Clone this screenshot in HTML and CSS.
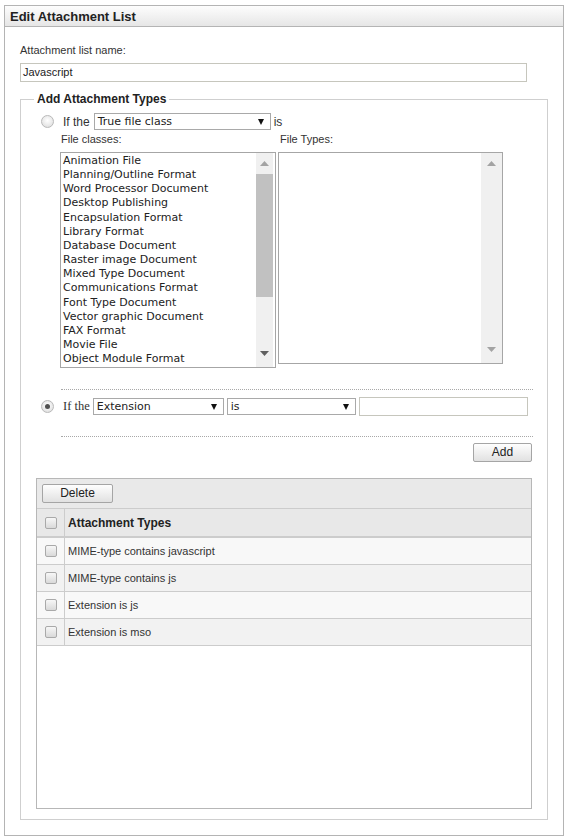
FILE: index.html
```html
<!DOCTYPE html>
<html>
<head>
<meta charset="utf-8">
<title>Edit Attachment List</title>
<link rel="stylesheet" href="styles.css">
</head>
<body>
<div class="panel">
  <div class="panel-head">Edit Attachment List</div>
  <div class="panel-body">
    <div class="field-label">Attachment list name:</div>
    <div class="text-box name-box">Javascript</div>
    <fieldset class="types">
      <legend>Add Attachment Types</legend>
      <div class="cond-row row-class">
        <span class="radio"></span>
        <span class="if-label">If the</span>
        <span class="select sel-class"><span class="val">True file class</span><svg class="caret" viewBox="0 0 6 6"><path d="M0 0H6L3 6Z" fill="#111"/></svg></span>
        <span class="is-label">is</span>
      </div>
      <div class="lists">
        <div class="list-col col-classes">
          <div class="list-label">File classes:</div>
          <div class="listbox lb-classes">
            <ul class="options">
              <li>Animation File</li>
              <li>Planning/Outline Format</li>
              <li>Word Processor Document</li>
              <li>Desktop Publishing</li>
              <li>Encapsulation Format</li>
              <li>Library Format</li>
              <li>Database Document</li>
              <li>Raster image Document</li>
              <li>Mixed Type Document</li>
              <li>Communications Format</li>
              <li>Font Type Document</li>
              <li>Vector graphic Document</li>
              <li>FAX Format</li>
              <li>Movie File</li>
              <li>Object Module Format</li>
            </ul>
            <div class="scroll">
              <span class="sb-btn"><svg width="9" height="5" viewBox="0 0 9 5"><path d="M0 5L4.5 0L9 5Z" fill="#a3a3a3"/></svg></span>
              <span class="thumb"></span>
              <span class="sb-fill"></span>
              <span class="sb-btn sb-down"><svg width="9" height="5" viewBox="0 0 9 5"><path d="M0 0L4.5 5L9 0Z" fill="#606060"/></svg></span>
            </div>
          </div>
        </div>
        <div class="list-col col-types">
          <div class="list-label">File Types:</div>
          <div class="listbox lb-types">
            <ul class="options"></ul>
            <div class="scroll">
              <span class="sb-btn"><svg width="9" height="5" viewBox="0 0 9 5"><path d="M0 5L4.5 0L9 5Z" fill="#a3a3a3"/></svg></span>
              <span class="sb-fill"></span>
              <span class="sb-btn sb-down"><svg width="9" height="5" viewBox="0 0 9 5"><path d="M0 0L4.5 5L9 0Z" fill="#a3a3a3"/></svg></span>
            </div>
          </div>
        </div>
      </div>
      <div class="dots dots-first"></div>
      <div class="cond-row row-ext">
        <span class="radio checked"></span>
        <span class="if-label if-serif">If the</span>
        <span class="select sel-ext"><span class="val">Extension</span><svg class="caret" viewBox="0 0 6 6"><path d="M0 0H6L3 6Z" fill="#111"/></svg></span>
        <span class="select sel-is"><span class="val">is</span><svg class="caret" viewBox="0 0 6 6"><path d="M0 0H6L3 6Z" fill="#111"/></svg></span>
        <span class="text-box ext-input"></span>
      </div>
      <div class="dots dots-second"></div>
      <div class="add-row"><button class="btn btn-add" type="button">Add</button></div>
      <div class="grid-box">
        <div class="toolbar"><button class="btn btn-delete" type="button">Delete</button></div>
        <table class="grid">
          <thead>
            <tr><th class="ck"><span class="cb"></span></th><th class="name">Attachment Types</th></tr>
          </thead>
          <tbody>
            <tr class="odd"><td class="ck"><span class="cb"></span></td><td class="name">MIME-type contains javascript</td></tr>
            <tr class="even"><td class="ck"><span class="cb"></span></td><td class="name">MIME-type contains js</td></tr>
            <tr class="odd"><td class="ck"><span class="cb"></span></td><td class="name">Extension is js</td></tr>
            <tr class="even"><td class="ck"><span class="cb"></span></td><td class="name">Extension is mso</td></tr>
          </tbody>
        </table>
      </div>
    </fieldset>
  </div>
</div>
</body>
</html>
```

FILE: styles.css
```css
* { box-sizing: border-box; }

body {
  margin: 0;
  background: #fff;
  font-family: "Liberation Sans", Arial, sans-serif;
  font-size: 11px;
  color: #333;
}

.panel {
  margin: 5px 0 0 4px;
  width: 560px;
  border: 1px solid #b4b4b4;
}

.panel-head {
  height: 21px;
  border-bottom: 1px solid #b4b4b4;
  background: linear-gradient(#fdfdfd, #e6e6e6);
  font-weight: bold;
  font-size: 13px;
  line-height: 21px;
  padding-left: 5px;
  color: #222;
}

.panel-body {
  padding: 16px 0 15px 15px;
}

.field-label {
  line-height: 14px;
  margin-bottom: 6px;
}

.text-box {
  display: block;
  height: 19px;
  border: 1px solid #c6c6bd;
  background: #fff;
  line-height: 17px;
  padding-left: 2px;
  color: #222;
}

.name-box { width: 507px; }

.types {
  margin: 10px 0 0;
  padding: 0 0 10px;
  width: 528px;
  min-width: 0;
  border: 1px solid #cfcfcf;
}

.types legend {
  margin-left: 13px;
  padding: 0 3px;
  font-weight: bold;
  font-size: 12px;
  line-height: 14px;
  color: #222;
}

.cond-row {
  display: flex;
  align-items: center;
  padding-left: 20px;
}

.row-class { height: 17px; margin-top: 7px; }
.row-ext { height: 19px; margin-top: 7px; }

.radio {
  flex: none;
  width: 13px;
  height: 13px;
  border-radius: 50%;
  border: 1px solid #b9b9b9;
  background: radial-gradient(circle at 50% 40%, #ffffff, #d9d9d9);
  margin-right: 9px;
}

.radio.checked {
  display: flex;
  align-items: center;
  justify-content: center;
}

.radio.checked::after {
  content: "";
  width: 5px;
  height: 5px;
  border-radius: 50%;
  background: #505050;
}

.if-label {
  font-size: 12px;
  color: #333;
  margin-right: 4px;
}

.if-serif {
  font-family: "Liberation Serif", "Times New Roman", serif;
  font-size: 12.5px;
  margin-right: 3px;
}

.is-label {
  font-size: 12px;
  color: #333;
}

.select {
  flex: none;
  display: flex;
  align-items: center;
  height: 17px;
  border: 1px solid #a9a9a9;
  background: #fff;
  font-family: "DejaVu Sans", Verdana, sans-serif;
  font-size: 11px;
  color: #222;
  padding: 0 6px 0 3px;
}

.select .val { flex: 1; white-space: nowrap; }

.caret { width: 6px; height: 6px; flex: none; }

.sel-class { width: 177px; margin-right: 3px; }
.sel-ext { width: 131px; margin-right: 3px; }
.sel-is { width: 129px; margin-right: 3px; }
.ext-input { width: 169px; }

.lists {
  display: flex;
  margin: 2px 0 0 39px;
}

.col-classes { width: 218px; }
.col-types { width: 225px; }

.list-label {
  line-height: 14px;
  margin-bottom: 6px;
  padding-left: 1px;
  color: #333;
}

.col-types .list-label { padding-left: 2px; }

.listbox {
  display: flex;
  border: 1px solid #a6a6a6;
  background: #fff;
}

.lb-classes { width: 216px; height: 216px; }
.lb-types { width: 225px; height: 212px; }

.options {
  flex: 1;
  list-style: none;
  margin: 0;
  padding: 1px 0 0 2px;
  overflow: hidden;
  white-space: nowrap;
  font-family: "DejaVu Sans", Verdana, sans-serif;
  font-size: 11px;
  line-height: 14.15px;
  color: #222;
}

.scroll {
  flex: none;
  display: flex;
  flex-direction: column;
  background: #f0f0f0;
}

.lb-classes .scroll { width: 17px; margin-right: 2px; }
.lb-types .scroll { width: 21px; }

.sb-btn {
  flex: none;
  height: 21px;
  display: flex;
  align-items: center;
  justify-content: center;
}

.sb-down { margin-bottom: 3px; }

.thumb {
  flex: none;
  height: 123px;
  background: #c1c1c1;
}

.sb-fill { flex: 1; }

.dots {
  margin-left: 40px;
  width: 472px;
  border-top: 1px dotted #a8a8a8;
}

.dots-first { margin-top: 21px; }
.dots-second { margin-top: 20px; }

.add-row {
  display: flex;
  justify-content: flex-end;
  margin: 6px 0 0 40px;
  width: 471px;
}

.btn {
  display: block;
  height: 19px;
  border: 1px solid #a5a5a5;
  border-radius: 2px;
  background: linear-gradient(#fefefe, #e1e1e1);
  font-family: "Liberation Sans", Arial, sans-serif;
  font-size: 12px;
  line-height: 17px;
  color: #222;
  padding: 0;
  margin: 0;
}

.btn-add { width: 59px; }
.btn-delete { width: 71px; }

.grid-box {
  margin: 16px 0 0 15px;
  width: 496px;
  height: 331px;
  border: 1px solid #b7b7b7;
  background: #fff;
}

.toolbar {
  height: 29px;
  background: #e9e9e9;
  padding: 5px 0 0 5px;
}

.grid {
  width: 100%;
  border-collapse: separate;
  border-spacing: 0;
}

.grid th,
.grid td {
  padding: 0;
  text-align: left;
  vertical-align: middle;
}

.grid th {
  height: 30px;
  background: #e8e8e8;
  border-top: 1px solid #cccccc;
  border-bottom: 2px solid #cccccc;
  font-size: 12px;
  font-weight: bold;
  color: #222;
}

.grid td {
  height: 27px;
  border-bottom: 1px solid #cccccc;
  font-size: 11px;
  color: #333;
}

.grid .ck {
  width: 28px;
  border-right: 1px solid #cccccc;
}

.grid .name { padding-left: 3px; }

.grid tr.odd td { background: #f8f8f8; }
.grid tr.even td { background: #f2f2f2; }

.cb {
  display: block;
  margin: 0 auto;
  width: 12px;
  height: 12px;
  border: 1px solid #a9a9a9;
  border-radius: 2px;
  background: linear-gradient(#f7f7f7, #d9d9d9);
}
```
